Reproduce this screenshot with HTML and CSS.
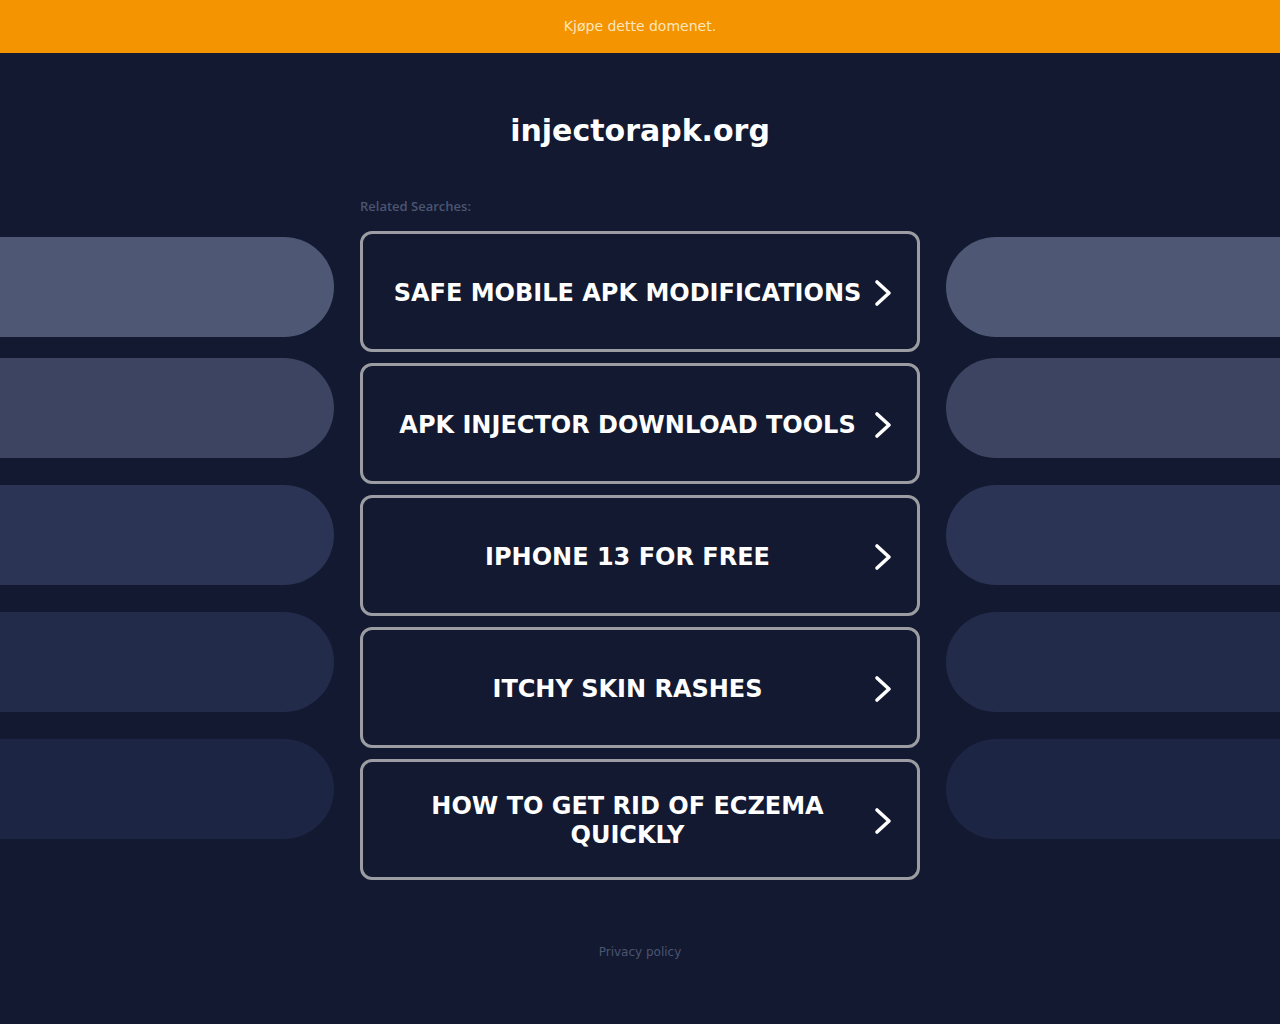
FILE: index.html
```html
<!DOCTYPE html>
<html lang="no">
<head>
<meta charset="utf-8">
<title>injectorapk.org</title>
<link rel="stylesheet" href="styles.css">
</head>
<body>
<div class="topbar"><a class="buy" href="#">Kjøpe dette domenet.</a></div>
<h1 class="title">injectorapk.org</h1>
<div class="main">
  <div class="side side-left">
    <div class="pill p1"></div>
    <div class="pill p2"></div>
    <div class="pill p3"></div>
    <div class="pill p4"></div>
    <div class="pill p5"></div>
  </div>
  <div class="center">
    <div class="related">Related Searches:</div>
    <div class="list">
      <a class="item" href="#"><span class="label">SAFE MOBILE APK MODIFICATIONS</span><svg class="chev" viewBox="0 0 20 28" width="20" height="28"><path d="M4 3 L16 14 L4 25" fill="none" stroke="#fff" stroke-width="3.6" stroke-linecap="round" stroke-linejoin="round"/></svg></a>
      <a class="item" href="#"><span class="label">APK INJECTOR DOWNLOAD TOOLS</span><svg class="chev" viewBox="0 0 20 28" width="20" height="28"><path d="M4 3 L16 14 L4 25" fill="none" stroke="#fff" stroke-width="3.6" stroke-linecap="round" stroke-linejoin="round"/></svg></a>
      <a class="item" href="#"><span class="label">IPHONE 13 FOR FREE</span><svg class="chev" viewBox="0 0 20 28" width="20" height="28"><path d="M4 3 L16 14 L4 25" fill="none" stroke="#fff" stroke-width="3.6" stroke-linecap="round" stroke-linejoin="round"/></svg></a>
      <a class="item" href="#"><span class="label">ITCHY SKIN RASHES</span><svg class="chev" viewBox="0 0 20 28" width="20" height="28"><path d="M4 3 L16 14 L4 25" fill="none" stroke="#fff" stroke-width="3.6" stroke-linecap="round" stroke-linejoin="round"/></svg></a>
      <a class="item" href="#"><span class="label">HOW TO GET RID OF ECZEMA QUICKLY</span><svg class="chev" viewBox="0 0 20 28" width="20" height="28"><path d="M4 3 L16 14 L4 25" fill="none" stroke="#fff" stroke-width="3.6" stroke-linecap="round" stroke-linejoin="round"/></svg></a>
    </div>
  </div>
  <div class="side side-right">
    <div class="pill p1"></div>
    <div class="pill p2"></div>
    <div class="pill p3"></div>
    <div class="pill p4"></div>
    <div class="pill p5"></div>
  </div>
</div>
<div class="footer"><a href="#">Privacy policy</a></div>
</body>
</html>
```

FILE: styles.css
```css
html, body {
  margin: 0;
  padding: 0;
}
body {
  background: #121930;
  font-family: "DejaVu Sans", sans-serif;
  color: #fff;
  min-height: 1024px;
}
a { text-decoration: none; }

.topbar {
  height: 53px;
  background: #f39400;
  display: flex;
  align-items: center;
  justify-content: center;
}
.buy {
  color: #fde6bd;
  font-size: 14px;
  line-height: 17px;
  margin-top: -1px;
}

.title {
  margin: 0;
  padding-top: 60px;
  text-align: center;
  font-size: 30px;
  line-height: 36px;
  font-weight: bold;
  color: #fff;
}

.main {
  margin-top: 50px;
  display: grid;
  grid-template-columns: 1fr 560px 1fr;
  column-gap: 26px;
  align-items: start;
}

.side {
  padding-top: 38px;
  display: flex;
  flex-direction: column;
  gap: 27px;
}
.pill {
  height: 100px;
}
.side-left .pill { border-radius: 0 50px 50px 0; }
.side-right .pill { border-radius: 50px 0 0 50px; }
.pill.p1 { background: #4e5874; margin-bottom: -6px; }
.pill.p2 { background: #3c4462; }
.pill.p3 { background: #2b3454; }
.pill.p4 { background: #222b4a; }
.pill.p5 { background: #1d2544; }

.related {
  font-family: "Open Sans", "DejaVu Sans", sans-serif;
  font-size: 13px;
  line-height: 15px;
  font-weight: 600;
  color: #4c5571;
  margin-bottom: 17px;
}

.list {
  display: flex;
  flex-direction: column;
  gap: 11px;
}
.item {
  box-sizing: border-box;
  height: 121px;
  border: 3px solid #9b9da3;
  border-radius: 12px;
  display: flex;
  align-items: center;
  padding: 0 24px 0 24px;
  gap: 5px;
  color: #fff;
}
.label {
  flex: 1;
  text-align: center;
  font-size: 24px;
  line-height: 29px;
  font-weight: bold;
  padding-top: 3px;
}
.chev {
  flex: none;
  display: block;
  margin-top: 2px;
}

.footer {
  margin-top: 65px;
  text-align: center;
  font-size: 12px;
  line-height: 15px;
}
.footer a {
  color: #4c5571;
}
```
